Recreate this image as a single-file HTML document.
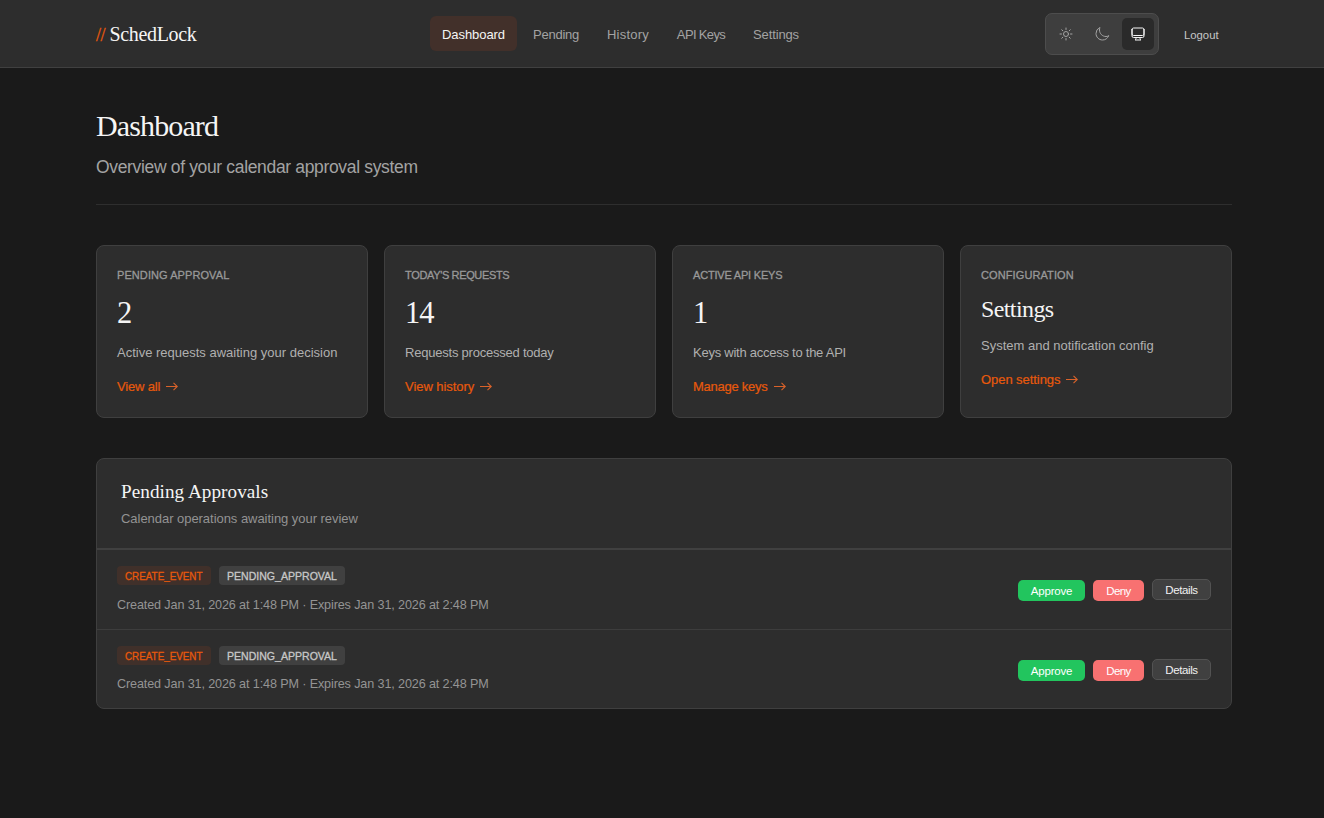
<!DOCTYPE html>
<html lang="en">
<head>
<meta charset="utf-8">
<title>SchedLock - Dashboard</title>
<style>
*{box-sizing:border-box;margin:0;padding:0}
html,body{width:1324px;height:818px;overflow:hidden}
body{position:relative;background:#1a1a1a;color:#f5f5f5;font-family:"Liberation Sans",sans-serif;font-size:13px}
a{text-decoration:none;color:inherit}
.t{position:absolute;white-space:nowrap}
.serif{font-family:"Liberation Serif",serif;font-weight:400}
.sx{display:inline-block;transform-origin:0 50%;white-space:nowrap}

/* header */
header{position:absolute;left:0;top:0;width:1324px;height:68px;background:#2d2d2d;border-bottom:1px solid #404040}
.logo{left:96px;top:22px;font-size:20px;line-height:24px;letter-spacing:-0.33px}
.logo .sl{position:absolute;left:0;top:1px;font-size:18px;letter-spacing:-0.4px;color:#e8590c;-webkit-text-stroke:0.3px #e8590c}
.logo .nm{position:absolute;left:13.5px;top:0}
nav{position:absolute;left:430px;top:16px;height:35px;display:flex;gap:4px}
nav a{display:block;height:35px;line-height:37px;text-align:center;border-radius:6px;color:#a3a3a3;font-size:13px;white-space:nowrap}
nav a.on{background:#42302a;color:#f5f5f5}
.toggle{position:absolute;left:1045px;top:13px;width:114px;height:42px;background:#3e3e3e;border:1px solid #4d4d4d;border-radius:7px}
.toggle .b{position:absolute;top:4px;width:32px;height:32px;border-radius:5px;color:#a3a3a3}
.toggle .b svg{position:absolute;left:8px;top:8px;width:16px;height:16px;fill:none;stroke:currentColor;stroke-width:1.5;stroke-linecap:round;stroke-linejoin:round}
.toggle .b.on{background:#2a2a2a;color:#f5f5f5}
.logout{left:1184px;top:28px;font-size:11.3px;line-height:15px;color:#c6c6c6}

/* page head */
h1{left:96px;top:109px;font-size:30px;line-height:34px;letter-spacing:-0.88px}
.sub{left:96px;top:156px;font-size:17.5px;line-height:22px;letter-spacing:-0.34px;color:#a3a3a3}
.hr{position:absolute;left:96px;top:204px;width:1136px;height:1px;background:#2e2e2e}

/* stat cards */
.card{position:absolute;top:245px;width:272px;height:173px;background:#2d2d2d;border:1px solid #3f3f3f;border-radius:8px}
.card .lbl{left:20px;top:21px;font-size:11px;line-height:16px;color:#999;-webkit-text-stroke:0.3px #999}
.card .num{left:20px;top:49.3px;font-size:30.5px;line-height:36px;letter-spacing:-1.1px}
.card .num.sm{left:20px;top:48.5px;font-size:24px;line-height:28px;letter-spacing:-0.6px}
.card .desc{left:20px;top:98px;font-size:13px;line-height:18px;color:#b0b0b0}
.card .lnk{left:20px;top:132px;font-size:13px;line-height:18px;color:#e8590c;-webkit-text-stroke:0.2px #e8590c}
.card.c4 .desc{top:91px}
.card.c4 .lnk{top:125px}
.arr{display:inline-block;width:12px;height:9px;margin-left:6px;vertical-align:0}
.arr path{fill:none;stroke:#d9622a;stroke-width:1.1}

/* pending panel */
.panel{position:absolute;left:96px;top:458px;width:1136px;height:251px;background:#2d2d2d;border:1px solid #3f3f3f;border-radius:8px;overflow:hidden}
.panel .ttl{left:24px;top:21px;font-size:19.2px;line-height:24px;letter-spacing:0.04px}
.panel .ps{left:24px;top:51px;font-size:13px;line-height:18px;letter-spacing:-0.04px;color:#939393}
.panel .sep0{position:absolute;left:0;top:89px;width:1134px;height:2px;background:#404040}
.panel .sep1{position:absolute;left:0;top:170px;width:1134px;height:1px;background:#3d3d3d}
.row{position:absolute;left:0;width:1134px;height:79px}
.badge{position:absolute;top:16px;height:19px;border-radius:4px;font-size:11.5px;line-height:21px;-webkit-text-stroke:0.3px currentColor}
.badge.op{left:20px;width:94px;background:#40302a;color:#e8590c}
.badge.st{left:122px;width:126px;background:#404040;color:#c8c8c8}
.badge .sx{position:absolute;left:8px;top:0}
.meta{left:20px;top:46px;font-size:12.6px;line-height:18px;letter-spacing:-0.12px;color:#949494}
.btn{position:absolute;height:21px;border-radius:5px;font-size:11.5px;line-height:22px;text-align:center;color:#fff;white-space:nowrap}
.btn.ok{left:921px;top:30px;width:67px;background:#22c55e;letter-spacing:-0.2px}
.btn.no{left:996px;top:30px;width:51px;background:#f87171;letter-spacing:-0.6px}
.btn.dt{left:1055px;top:29px;width:59px;background:#404040;border:1px solid #525252;line-height:21px;letter-spacing:-0.38px;color:#f0f0f0}
</style>
</head>
<body>
<header>
  <div class="t logo serif"><span class="sl">//</span><span class="nm">SchedLock</span></div>
  <nav>
    <a class="on" style="width:87px;letter-spacing:-0.07px">Dashboard</a><a style="width:70px;letter-spacing:-0.25px">Pending</a><a style="width:66px;letter-spacing:0.22px">History</a><a style="width:72px;letter-spacing:-0.65px">API Keys</a><a style="width:70px;letter-spacing:-0.12px">Settings</a>
  </nav>
  <div class="toggle">
    <div class="b" style="left:4px"><svg viewBox="0 0 24 24"><path d="M12 3v2.25m6.364.386-1.591 1.591M21 12h-2.25m-.386 6.364-1.591-1.591M12 18.75V21m-4.773-4.227-1.591 1.591M5.25 12H3m4.227-4.773L5.636 5.636M15.75 12a3.75 3.75 0 1 1-7.5 0 3.75 3.75 0 0 1 7.5 0Z"/></svg></div>
    <div class="b" style="left:40px"><svg viewBox="0 0 24 24"><path d="M21.752 15.002A9.72 9.72 0 0 1 18 15.75c-5.385 0-9.75-4.365-9.75-9.75 0-1.33.266-2.597.748-3.752A9.753 9.753 0 0 0 3 11.25C3 16.635 7.365 21 12.75 21a9.753 9.753 0 0 0 9.002-5.998Z"/></svg></div>
    <div class="b on" style="left:76px"><svg viewBox="0 0 24 24"><path d="M9 17.25v1.007a3 3 0 0 1-.879 2.122L7.5 21h9l-.621-.621A3 3 0 0 1 15 18.257V17.25m6-12V15a2.25 2.25 0 0 1-2.25 2.25H5.25A2.25 2.25 0 0 1 3 15V5.25m18 0A2.25 2.25 0 0 0 18.75 3H5.25A2.25 2.25 0 0 0 3 5.25m18 0V12a2.25 2.25 0 0 1-2.25 2.25H5.25A2.25 2.25 0 0 1 3 12V5.25"/></svg></div>
  </div>
  <div class="t logout">Logout</div>
</header>

<h1 class="t serif">Dashboard</h1>
<div class="t sub">Overview of your calendar approval system</div>
<div class="hr"></div>

<div class="card" style="left:96px">
  <div class="t lbl" style="letter-spacing:0.08px">PENDING APPROVAL</div>
  <div class="t num serif">2</div>
  <div class="t desc">Active requests awaiting your decision</div>
  <div class="t lnk" style="letter-spacing:-0.16px">View all<svg class="arr" viewBox="0 0 12 9"><path d="M0 4.5H11.3M7.5 0.8L11.3 4.5L7.5 8.2"/></svg></div>
</div>
<div class="card" style="left:384px">
  <div class="t lbl" style="letter-spacing:-0.35px">TODAY'S REQUESTS</div>
  <div class="t num serif">14</div>
  <div class="t desc" style="letter-spacing:-0.22px">Requests processed today</div>
  <div class="t lnk" style="letter-spacing:-0.05px">View history<svg class="arr" viewBox="0 0 12 9"><path d="M0 4.5H11.3M7.5 0.8L11.3 4.5L7.5 8.2"/></svg></div>
</div>
<div class="card" style="left:672px">
  <div class="t lbl" style="letter-spacing:-0.2px">ACTIVE API KEYS</div>
  <div class="t num serif">1</div>
  <div class="t desc" style="letter-spacing:-0.25px">Keys with access to the API</div>
  <div class="t lnk" style="letter-spacing:-0.25px">Manage keys<svg class="arr" viewBox="0 0 12 9"><path d="M0 4.5H11.3M7.5 0.8L11.3 4.5L7.5 8.2"/></svg></div>
</div>
<div class="card c4" style="left:960px">
  <div class="t lbl" style="letter-spacing:0.1px">CONFIGURATION</div>
  <div class="t num sm serif">Settings</div>
  <div class="t desc">System and notification config</div>
  <div class="t lnk" style="letter-spacing:-0.06px">Open settings<svg class="arr" viewBox="0 0 12 9"><path d="M0 4.5H11.3M7.5 0.8L11.3 4.5L7.5 8.2"/></svg></div>
</div>

<div class="panel">
  <div class="t ttl serif">Pending Approvals</div>
  <div class="t ps">Calendar operations awaiting your review</div>
  <div class="sep0"></div>
  <div class="row" style="top:91px">
    <div class="badge op"><span class="sx" style="transform:scaleX(.856)">CREATE_EVENT</span></div>
    <div class="badge st"><span class="sx" style="transform:scaleX(.917)">PENDING_APPROVAL</span></div>
    <div class="t meta">Created Jan 31, 2026 at 1:48 PM · Expires Jan 31, 2026 at 2:48 PM</div>
    <div class="btn ok">Approve</div><div class="btn no">Deny</div><div class="btn dt">Details</div>
  </div>
  <div class="sep1"></div>
  <div class="row" style="top:171px">
    <div class="badge op"><span class="sx" style="transform:scaleX(.856)">CREATE_EVENT</span></div>
    <div class="badge st"><span class="sx" style="transform:scaleX(.917)">PENDING_APPROVAL</span></div>
    <div class="t meta" style="top:45.4px">Created Jan 31, 2026 at 1:48 PM · Expires Jan 31, 2026 at 2:48 PM</div>
    <div class="btn ok">Approve</div><div class="btn no">Deny</div><div class="btn dt">Details</div>
  </div>
</div>
</body>
</html>
